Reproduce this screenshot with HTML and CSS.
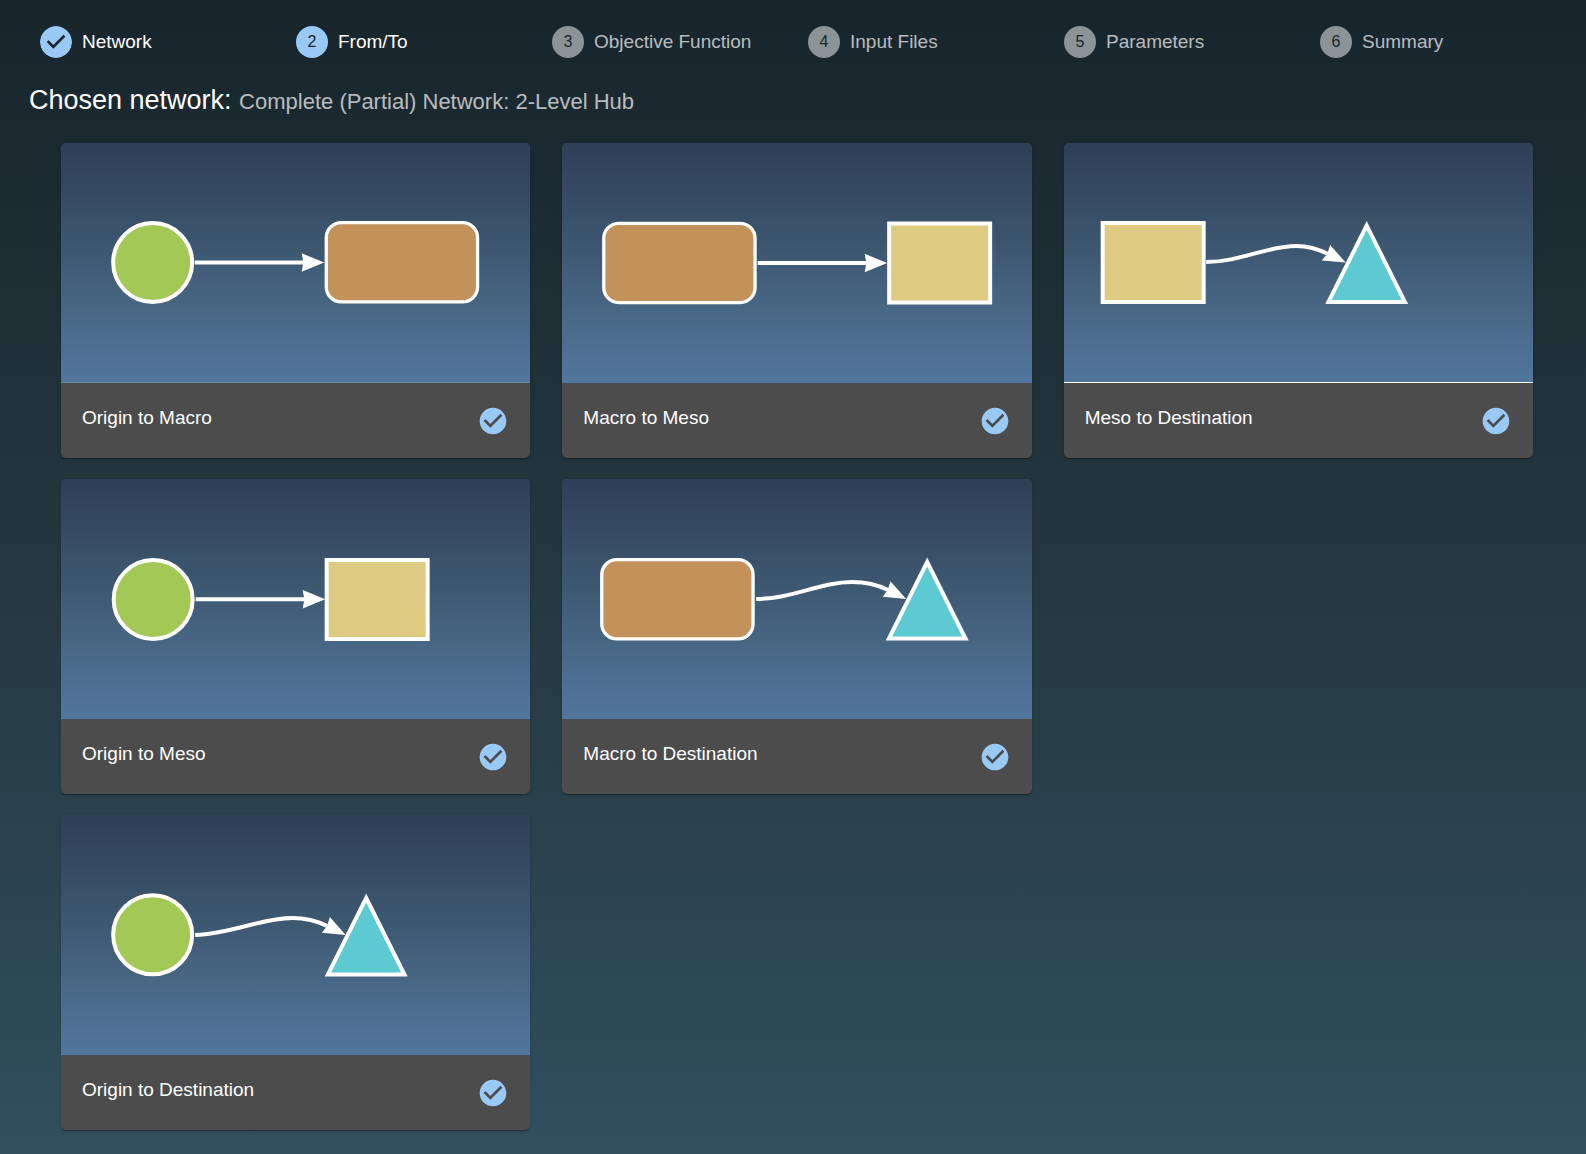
FILE: index.html
```html
<!DOCTYPE html>
<html lang="en">
<head>
<meta charset="utf-8">
<meta name="viewport" content="width=device-width, initial-scale=1">
<title>Network setup – From/To</title>
<link rel="stylesheet" href="styles.css">
</head>
<body>
<svg class="sprite" aria-hidden="true">
  <symbol id="tick" viewBox="0 0 24 24">
    <path d="M12 2C6.48 2 2 6.48 2 12s4.48 10 10 10 10-4.48 10-10S17.52 2 12 2zm-2 15l-5-5 1.41-1.41L10 14.17l7.59-7.59L19 8l-9 9z"/>
  </symbol>
  <g id="origin"><circle class="origin" cx="41.5" cy="41.5" r="39.5"/></g>
  <g id="macro"><rect class="macro" x="1.6" y="1.6" width="151.3" height="79.3" rx="15"/></g>
  <g id="meso"><rect class="meso" x="2" y="2" width="101" height="79"/></g>
  <g id="destination">
    <path class="line-fill" d="M41.5 0L83 83H0z"/>
    <path class="destination" d="M41.5 9L76.5 79H6.5z"/>
  </g>
  <g id="straight">
    <path class="line" d="M0 0H110"/>
    <path class="line-fill" d="M129.500 0L107 9.200L108.700 0L107-9.200z"/>
  </g>
</svg>

<nav aria-label="Progress">
  <ol class="steps">
    <li class="step step-on">
      <svg class="step-mark" viewBox="0 0 24 24" aria-hidden="true"><path d="M12 0a12 12 0 1 0 0 24 12 12 0 0 0 0-24zm-2 17l-5-5 1.4-1.4 3.600 3.600 7.600-7.600L19 8l-9 9z"/></svg>
      <span>Network</span>
    </li>
    <li class="step step-on" aria-current="step"><span class="step-mark">2</span><span>From/To</span></li>
    <li class="step"><span class="step-mark">3</span><span>Objective Function</span></li>
    <li class="step"><span class="step-mark">4</span><span>Input Files</span></li>
    <li class="step"><span class="step-mark">5</span><span>Parameters</span></li>
    <li class="step"><span class="step-mark">6</span><span>Summary</span></li>
  </ol>
</nav>

<main>
  <h1 class="heading">Chosen network: <span class="chosen">Complete (Partial) Network: 2-Level Hub</span></h1>

  <div class="cards">
    <label class="card col-1">
      <svg class="diagram diagram-soft-edge" viewBox="0 0 469 240" aria-hidden="true">
        <use href="#origin" x="50" y="78"/>
        <use href="#straight" x="133.500" y="119.500"/>
        <use href="#macro" x="263.500" y="78"/>
      </svg>
      <span class="card-foot">
        <span class="card-name">Origin to Macro</span>
        <span class="check"><input type="checkbox" checked><svg aria-hidden="true"><use href="#tick"/></svg></span>
      </span>
    </label>

    <label class="card col-2">
      <svg class="diagram" viewBox="0 0 469 240" aria-hidden="true">
        <use href="#macro" x="40" y="78.700"/>
        <use href="#straight" x="195.500" y="120"/>
        <use href="#meso" x="325" y="78.500"/>
      </svg>
      <span class="card-foot">
        <span class="card-name">Macro to Meso</span>
        <span class="check"><input type="checkbox" checked><svg aria-hidden="true"><use href="#tick"/></svg></span>
      </span>
    </label>

    <label class="card col-3">
      <svg class="diagram diagram-edge" viewBox="0 0 469 240" aria-hidden="true">
        <use href="#meso" x="36.500" y="78"/>
        <path class="line" d="M142 119C176 119 202 103 232 103C246 103 256 107 264 111"/>
        <path class="line-fill" d="M281.500 119.500L257.500 117.500L263 111L266 102z"/>
        <use href="#destination" x="261" y="78"/>
      </svg>
      <span class="card-foot">
        <span class="card-name">Meso to Destination</span>
        <span class="check"><input type="checkbox" checked><svg aria-hidden="true"><use href="#tick"/></svg></span>
      </span>
    </label>

    <label class="card col-1">
      <svg class="diagram" viewBox="0 0 469 240" aria-hidden="true">
        <use href="#origin" x="50.500" y="79"/>
        <use href="#straight" x="134.500" y="120.300"/>
        <use href="#meso" x="263.500" y="79"/>
      </svg>
      <span class="card-foot">
        <span class="card-name">Origin to Meso</span>
        <span class="check"><input type="checkbox" checked><svg aria-hidden="true"><use href="#tick"/></svg></span>
      </span>
    </label>

    <label class="card col-2">
      <svg class="diagram" viewBox="0 0 469 240" aria-hidden="true">
        <use href="#macro" x="38" y="79"/>
        <path class="line" d="M194 120C230 120 258 103 290 103C306 103 318 107 326 111"/>
        <path class="line-fill" d="M344 120L320.500 117.700L325.500 111L328.300 102.300z"/>
        <use href="#destination" x="323.500" y="78.500"/>
      </svg>
      <span class="card-foot">
        <span class="card-name">Macro to Destination</span>
        <span class="check"><input type="checkbox" checked><svg aria-hidden="true"><use href="#tick"/></svg></span>
      </span>
    </label>

    <label class="card col-1">
      <svg class="diagram" viewBox="0 0 469 240" aria-hidden="true">
        <use href="#origin" x="50" y="78.300"/>
        <path class="line" d="M134 120C170 119 200 103 231 103C246 103 258 107 266 111"/>
        <path class="line-fill" d="M284.500 120L260.700 117.700L266 111L268.700 102z"/>
        <use href="#destination" x="263.500" y="78.500"/>
      </svg>
      <span class="card-foot">
        <span class="card-name">Origin to Destination</span>
        <span class="check"><input type="checkbox" checked><svg aria-hidden="true"><use href="#tick"/></svg></span>
      </span>
    </label>
  </div>
</main>
</body>
</html>
```

FILE: styles.css
```css
:root {
  --accent: #99c9f7;
  --card: #4c4c4c;
  --muted: rgba(255, 255, 255, 0.7);
}

* {
  box-sizing: border-box;
}

html {
  min-height: 100%;
  background: linear-gradient(#18252c, #243840 50%, #314f5e);
}

body {
  margin: 0;
  padding: 26px 0 24px;
  color: #fff;
  font-family: "Liberation Sans", Arial, Helvetica, sans-serif;
  font-size: 19px;
  line-height: 28px;
}

.sprite {
  position: absolute;
  width: 0;
  height: 0;
}

/* Stepper */
.steps {
  display: grid;
  grid-template-columns: repeat(6, 1fr);
  margin: 0 0 26px;
  padding: 0 10px 0 40px;
  list-style: none;
}

.step {
  display: flex;
  align-items: center;
  gap: 10px;
  color: var(--muted);
}

.step-on {
  color: #fff;
}

.step-mark {
  display: grid;
  place-items: center;
  flex: none;
  width: 32px;
  height: 32px;
  border-radius: 50%;
  background: rgba(255, 255, 255, 0.5);
  color: #18252c;
  font-size: 16px;
}

.step-on .step-mark {
  background: var(--accent);
}

.step-on svg.step-mark {
  background: none;
  fill: var(--accent);
}

/* Heading */
.heading {
  margin: 0 0 27px;
  padding: 0 29px;
  font-size: 27px;
  font-weight: 400;
  line-height: 32px;
}

.chosen {
  color: var(--muted);
  font-size: 22px;
  line-height: 22px;
}

/* Cards */
.cards {
  display: grid;
  grid-template-columns: repeat(3, 1fr);
  gap: 21px 32px;
  padding: 0 53px 0 61px;
}

.col-1 { grid-column: 1; }
.col-2 { grid-column: 2; }
.col-3 { grid-column: 3; }

.card {
  overflow: hidden;
  border-radius: 5px;
  background: var(--card);
  box-shadow: 0 2px 1px -1px rgba(0, 0, 0, 0.2), 0 1px 1px rgba(0, 0, 0, 0.14), 0 1px 4px rgba(0, 0, 0, 0.12);
  cursor: pointer;
}

.diagram {
  display: block;
  width: 100%;
  height: 240px;
  background: linear-gradient(#2e3f56, #3c556e 40%, #496887 72%, #52769d);
}

.diagram-edge {
  box-shadow: inset 0 -1px #fff;
}

.diagram-soft-edge {
  box-shadow: inset 0 -1px #6c8799;
}

.card-foot {
  display: flex;
  align-items: flex-start;
  justify-content: space-between;
  padding: 22px 21px 21px;
}

.card-name {
  line-height: 26px;
}

.check {
  display: grid;
  width: 32px;
  height: 32px;
}

.check > * {
  grid-area: 1 / 1;
  width: 32px;
  height: 32px;
  margin: 0;
}

.check input {
  opacity: 0;
}

.check svg {
  fill: rgba(255, 255, 255, 0.3);
}

.check input:checked + svg {
  fill: var(--accent);
}

/* Diagram shapes */
.origin, .macro, .meso {
  stroke: #fff;
  stroke-width: 4;
}

.origin { fill: #a3c855; }
.macro { fill: #c3915a; stroke-width: 3.3; }
.meso { fill: #dccb80; }
.destination { fill: #5dc9d1; }

.line {
  fill: none;
  stroke: #fff;
  stroke-width: 4;
}

.line-fill {
  fill: #fff;
}
```
